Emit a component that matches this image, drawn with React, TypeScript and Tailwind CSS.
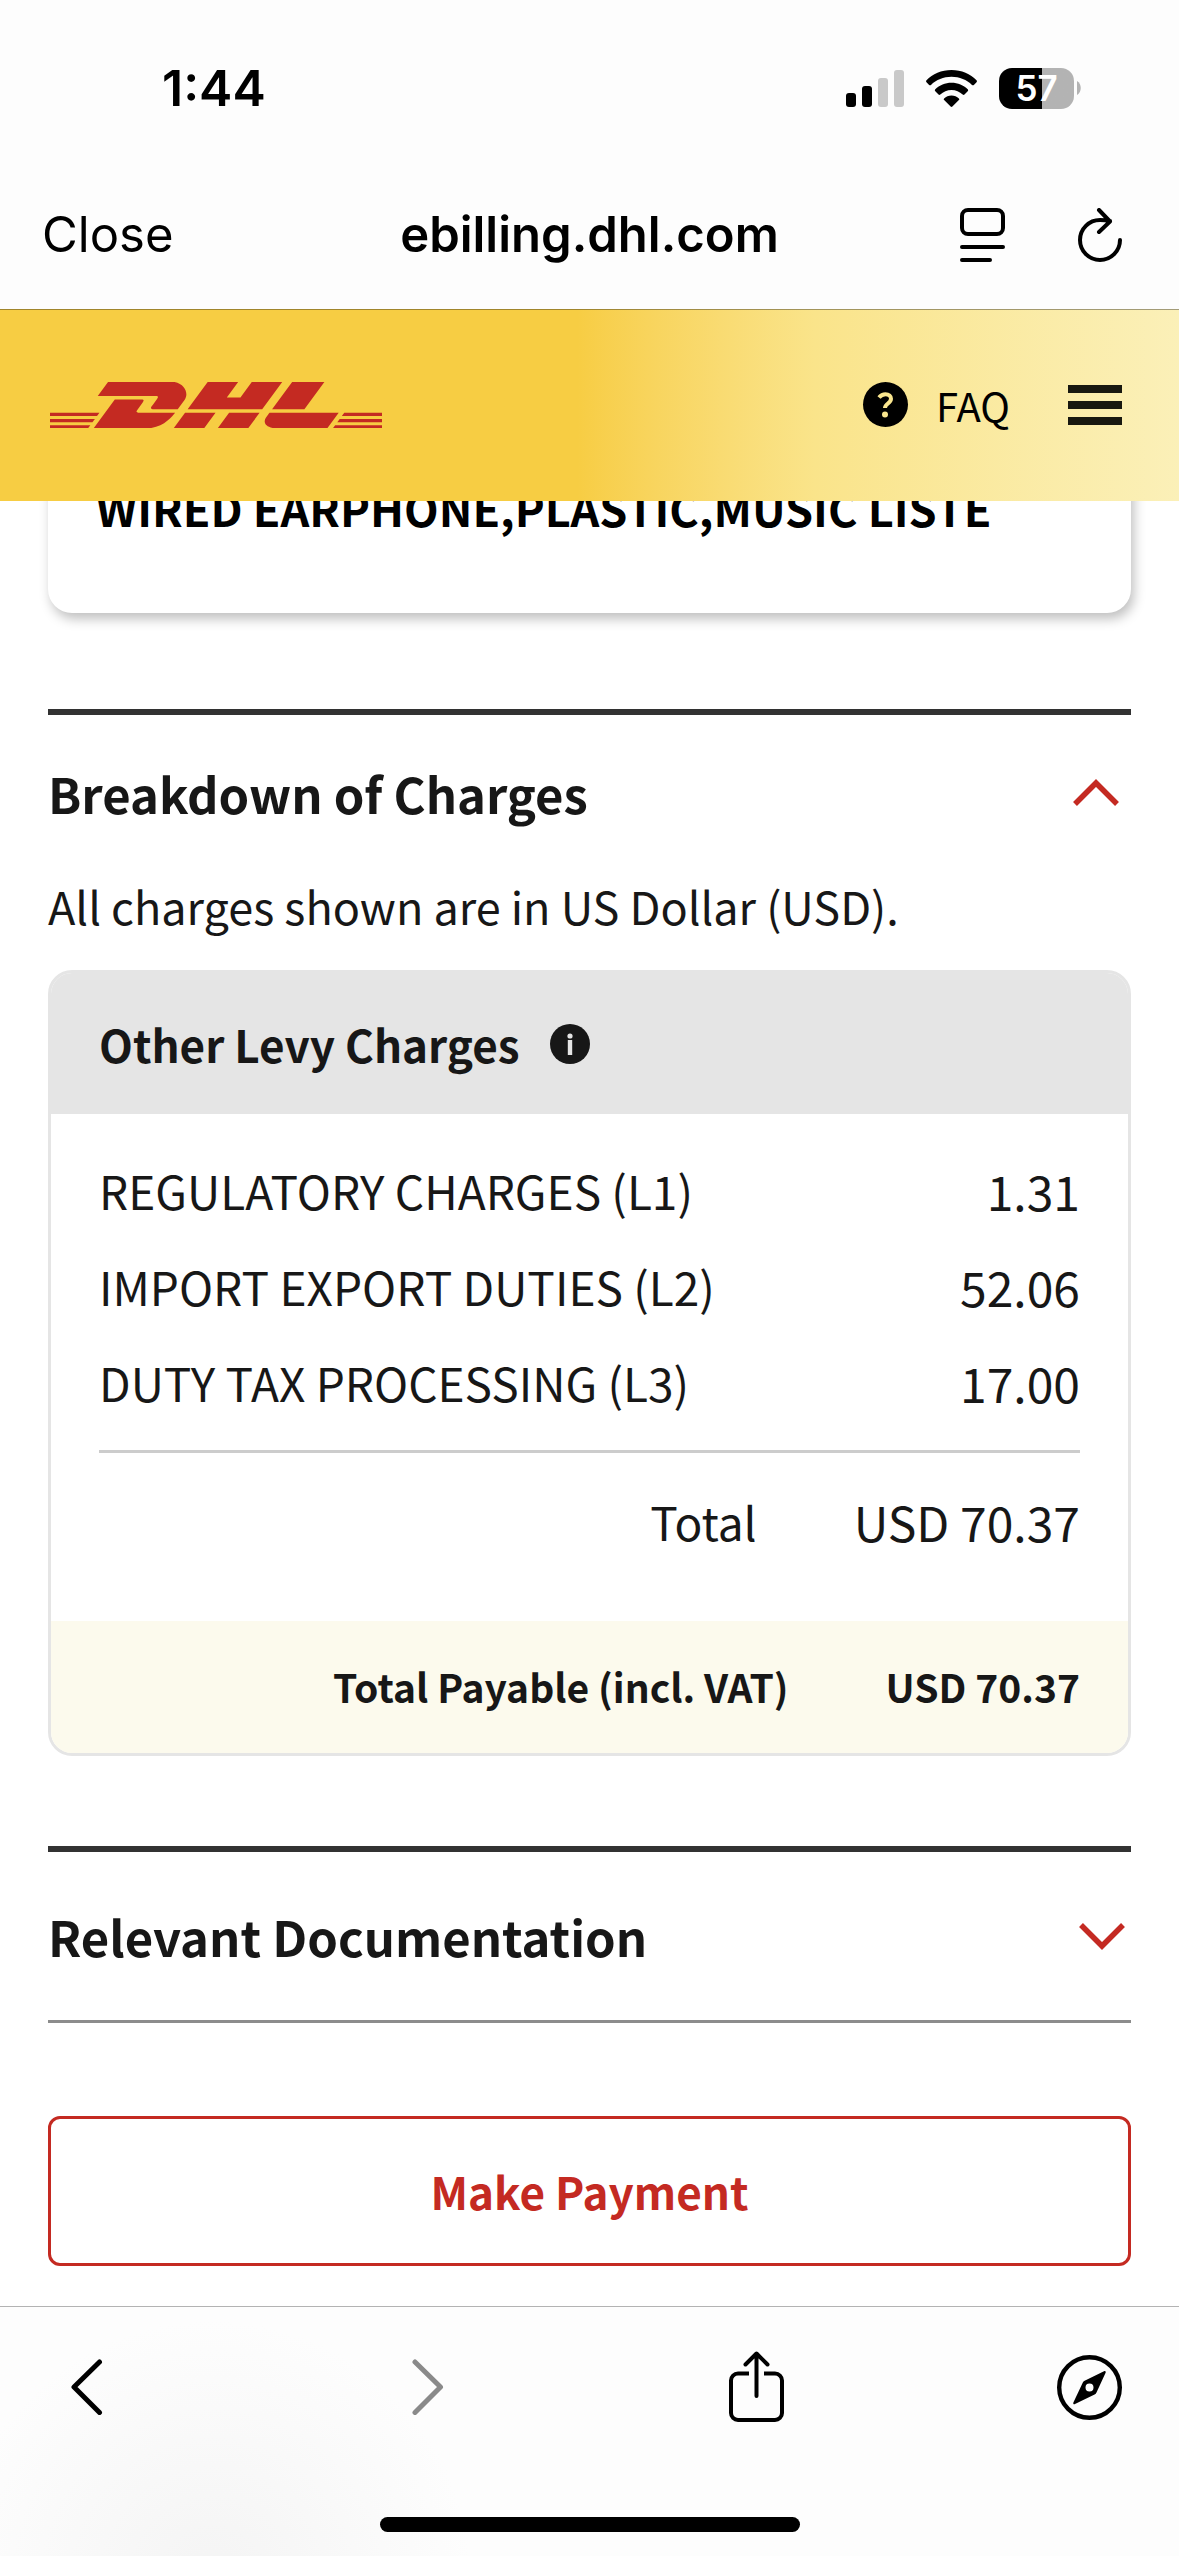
import React, { useState } from "react";
import { SiDhl } from "react-icons/si";

const charges = [
  { label: "REGULATORY CHARGES (L1)", amount: "1.31" },
  { label: "IMPORT EXPORT DUTIES (L2)", amount: "52.06" },
  { label: "DUTY TAX PROCESSING (L3)", amount: "17.00" },
];

const StatusBar = () => (
  <div className="flex h-[176px] items-center justify-between pr-[98px] pl-[162px]">
    <span className="text-[50px] leading-[64px] font-semibold">1:44</span>
    <div className="flex items-center">
      <svg className="mr-[22px] h-[38px] w-[58px]" viewBox="0 0 58 38">
        <rect x="0" y="24" width="10" height="14" rx="3" />
        <rect x="16" y="17" width="10" height="21" rx="3" />
        <rect x="32" y="9" width="10" height="29" rx="3" fill="#c9c9c9" />
        <rect x="48" y="1" width="10" height="37" rx="3" fill="#c9c9c9" />
      </svg>
      <svg className="mr-[22px] h-[38px] w-[51px]" viewBox="0 0 51 38">
        <path d="M25.500 1C35.500 1 44.500 5 50.500 11.200c.6.700.6 1.400 0 2l-2.600 2.700c-.6.600-1.300.6-1.900 0C40.700 10.800 33.500 7.800 25.500 7.800S10.300 10.800 5 15.900c-.6.600-1.300.6-1.900 0L.5 13.200c-.6-.6-.6-1.300 0-2C6.500 5 15.500 1 25.500 1z" />
        <path d="M25.500 13.800c6.400 0 12 2.500 16.200 6.500.6.600.6 1.300 0 1.900l-3.200 3.300c-.6.600-1.200.6-1.800.1-3-2.900-6.900-4.600-11.200-4.600s-8.200 1.700-11.200 4.600c-.6.500-1.200.5-1.800-.1l-3.200-3.300c-.6-.6-.6-1.300 0-1.900 4.200-4 9.800-6.500 16.200-6.500z" />
        <path d="M25.500 26.500c2.900 0 5.400 1.100 7.400 2.900.5.500.5 1.100 0 1.700l-6.500 6.400c-.6.600-1.200.6-1.800 0l-6.500-6.400c-.5-.6-.5-1.200 0-1.700 2-1.800 4.500-2.900 7.400-2.900z" />
      </svg>
      <div className="flex h-[41px] w-[75px] items-center justify-center rounded-[13px] bg-linear-to-r from-black from-57% to-[#b3b3b3] to-57%">
        <span className="text-[35px] leading-[41px] font-semibold text-white">57</span>
      </div>
      <svg className="ml-[3px] h-[14px] w-[4px]" viewBox="0 0 4 14">
        <path d="M0 0c5 3 5 11 0 14z" fill="#b3b3b3" />
      </svg>
    </div>
  </div>
);

const BrowserBar = () => (
  <div className="grid h-[133px] grid-cols-[1fr_auto_1fr] items-center px-[42px] pb-[15px]">
    <button className="justify-self-start text-[49px] leading-[64px]">Close</button>
    <span className="text-[49px] leading-[64px] font-semibold">ebilling.dhl.com</span>
    <div className="flex gap-[73px] justify-self-end pr-[15px]">
      <button aria-label="Reader">
        <svg
          className="h-[54px] w-[45px]"
          viewBox="0 0 45 54"
          fill="none"
          stroke="black"
          strokeWidth="4"
          strokeLinecap="round"
        >
          <rect x="2" y="2" width="41" height="24" rx="6" />
          <path d="M2 39h41M2 52h28" />
        </svg>
      </button>
      <button aria-label="Reload">
        <svg
          className="h-[54px] w-[44px]"
          viewBox="0 0 44 54"
          fill="none"
          stroke="black"
          strokeWidth="4"
          strokeLinecap="round"
          strokeLinejoin="round"
        >
          <path d="M42 32A20 20 0 1 1 22 12q5 0 10 1M21 2l11 11.500L21 24" />
        </svg>
      </button>
    </div>
  </div>
);

const SiteHeader = () => (
  <header className="flex h-[192px] items-center justify-between border-t border-black/35 bg-linear-to-r from-[#f7cd43] from-49% via-[#fae48a] via-69% to-[#fbf0b8] pr-[57px] pb-[2px] pl-[50px] font-['Noto_Sans_CJK_JP',sans-serif]">
    <a href="#home" aria-label="DHL">
      <SiDhl viewBox="0 10.340 24 3.320" className="h-[46px] w-[332px] text-[#c42a22]" />
    </a>
    <div className="flex items-center">
      <a href="#faq" className="flex items-center gap-[28px]">
        <span className="flex size-[45px] items-center justify-center rounded-full bg-black">
          <svg className="h-[26px] w-[17px]" viewBox="0 0 17 26" fill="none">
            <path
              d="M2 5.500C4 3 6 2.200 8.500 2.200c3.400 0 5.500 1.800 5.500 4.600 0 4.600-6 4.800-6 9.200"
              stroke="#fae68f"
              strokeWidth="4"
            />
            <circle cx="8" cy="22.500" r="3" fill="#fae68f" />
          </svg>
        </span>
        <span className="text-[40px] leading-[48px]">FAQ</span>
      </a>
      <button aria-label="Menu" className="ml-[58px] flex flex-col gap-[8px]">
        <span className="h-[8px] w-[54px] bg-[#181810]" />
        <span className="h-[8px] w-[54px] bg-[#181810]" />
        <span className="h-[8px] w-[54px] bg-[#181810]" />
      </button>
    </div>
  </header>
);

const Chevron = ({ open }: { open: boolean }) => (
  <svg
    className="h-[28px] w-[46px]"
    viewBox="0 0 46 28"
    fill="none"
    stroke="#c42a22"
    strokeWidth="5.5"
  >
    <path d={open ? "M2 25L23 4l21 21" : "M2 3l21 21L44 3"} />
  </svg>
);

const ChargesTable = () => (
  <div className="mt-[32px] overflow-hidden rounded-[24px] border-3 border-[#e5e5e5]">
    <div className="flex items-center gap-[30px] bg-[#e5e5e5] px-[48px] pt-[39px] pb-[38px]">
      <h3 className="text-[44px] leading-[64px] font-bold">Other Levy Charges</h3>
      <button aria-label="More information">
        <svg className="size-[40px]" viewBox="0 0 40 40">
          <circle cx="20" cy="20" r="20" fill="#171717" />
          <circle cx="20" cy="12" r="2.600" fill="#e5e5e5" />
          <rect x="17.800" y="16" width="4.400" height="15" fill="#e5e5e5" />
        </svg>
      </button>
    </div>
    <div className="px-[48px] pt-[28px] pb-[52px]">
      <table className="w-full text-[46px] leading-[96px]">
        <tbody>
          {charges.map((item) => (
            <tr key={item.label}>
              <th scope="row" className="text-left font-normal">
                {item.label}
              </th>
              <td className="text-right text-[48px] leading-[96px]">{item.amount}</td>
            </tr>
          ))}
        </tbody>
        <tfoot>
          <tr>
            <td colSpan={2} className="h-[43px]">
              <div className="h-[3px] bg-[#cccccc]" />
            </td>
          </tr>
          <tr>
            <th scope="row" className="w-full pr-[97px] text-right font-normal">
              Total
            </th>
            <td className="text-right text-[48px] leading-[96px] whitespace-nowrap">USD 70.37</td>
          </tr>
        </tfoot>
      </table>
    </div>
    <dl className="flex justify-end gap-[97px] bg-[#fcfaed] px-[48px] pt-[33px] pb-[35px] text-[39px] leading-[64px] font-bold">
      <dt>Total Payable (incl. VAT)</dt>
      <dd>USD 70.37</dd>
    </dl>
  </div>
);

const BottomBar = () => (
  <nav className="border-t border-[#b3b3b3] bg-[radial-gradient(circle_at_18%_110%,#f4f4f4,#fdfdfd_260px)] pt-[44px] pb-[24px]">
    <div className="flex h-[72px] items-center justify-between px-[57px]">
      <button aria-label="Back">
        <svg className="h-[56px] w-[65px]" viewBox="0 0 65 56" fill="none" stroke="black" strokeWidth="5" strokeLinecap="round" strokeLinejoin="round">
          <path d="M42.500 3L17 28l25.500 25.500" />
        </svg>
      </button>
      <button aria-label="Forward">
        <svg className="h-[56px] w-[65px]" viewBox="0 0 65 56" fill="none" stroke="#8a8a8a" strokeWidth="5" strokeLinecap="round" strokeLinejoin="round">
          <path d="M25 3l25.500 25L25 53.500" />
        </svg>
      </button>
      <button aria-label="Share">
        <svg className="h-[72px] w-[65px]" viewBox="0 0 65 72" fill="none" stroke="black" strokeWidth="4" strokeLinecap="round" strokeLinejoin="round">
          <path d="M32.500 45V3M21.500 13.500L32.500 2.500l11 11" />
          <path d="M25 22.500H14a7 7 0 0 0-7 7V62a7 7 0 0 0 7 7h37a7 7 0 0 0 7-7V29.500a7 7 0 0 0-7-7H40" strokeLinecap="butt" />
        </svg>
      </button>
      <button aria-label="Open in Safari">
        <svg className="size-[65px]" viewBox="0 0 65 65">
          <circle cx="32.500" cy="32.500" r="30.300" fill="none" stroke="black" strokeWidth="4.400" />
          <path
            fillRule="evenodd"
            d="M47 16.200c1.200-.6 2.200.4 1.600 1.600L39.500 37.500c-.4.900-1 1.500-1.900 1.900L18 49c-1.200.6-2.200-.4-1.600-1.600l9.300-19.700c.4-.9 1-1.500 1.900-1.900zM32.500 28.500a4 4 0 1 0 0 8 4 4 0 0 0 0-8z"
          />
        </svg>
      </button>
    </div>
    <div className="mx-auto mt-[94px] h-[15px] w-[420px] rounded-full bg-black" />
  </nav>
);

const App = () => {
  const [chargesOpen, setChargesOpen] = useState(true);
  const [docsOpen, setDocsOpen] = useState(false);
  return (
    <div className="flex min-h-screen flex-col bg-white font-['Inter',sans-serif] text-black">
      <div className="bg-[#fdfdfd]">
        <StatusBar />
        <BrowserBar />
      </div>
      <SiteHeader />
      <main className="flex-1 overflow-hidden px-[48px] pb-[40px] font-['Noto_Sans_CJK_JP',sans-serif] text-[#171717]">
        {/* scrolled partly under the site header */}
        <div className="-mt-[74px] rounded-[24px] bg-white px-[48px] pt-[49px] pb-[73px] shadow-[3px_6px_12px_rgba(0,0,0,0.25)]">
          <p className="text-[45px] leading-[64px] font-bold text-black">
            WIRED EARPHONE,PLASTIC,MUSIC LISTE
          </p>
        </div>
        <section className="mt-[96px] border-t-6 border-[#323232] pt-[46px]">
          <h2 className="text-[49px] leading-[64px] font-bold">
            <button
              aria-expanded={chargesOpen}
              onClick={() => setChargesOpen(!chargesOpen)}
              className="flex w-full items-center justify-between pr-[12px] text-left"
            >
              Breakdown of Charges
              <Chevron open={chargesOpen} />
            </button>
          </h2>
          {chargesOpen && (
            <>
              <p className="mt-[49px] text-[45px] leading-[64px]">
                All charges shown are in US Dollar (USD).
              </p>
              <ChargesTable />
            </>
          )}
        </section>
        <section className="mt-[90px] border-t-6 border-b-3 border-t-[#323232] border-b-[#8c8c8c] py-[52px]">
          <h2 className="text-[49px] leading-[64px] font-bold">
            <button
              aria-expanded={docsOpen}
              onClick={() => setDocsOpen(!docsOpen)}
              className="flex w-full items-center justify-between pr-[6px] text-left"
            >
              Relevant Documentation
              <Chevron open={docsOpen} />
            </button>
          </h2>
        </section>
        <button className="mt-[93px] h-[150px] w-full rounded-[12px] border-3 border-[#c42a22] text-[44px] leading-[64px] font-bold text-[#c42a22]">
          Make Payment
        </button>
      </main>
      <BottomBar />
    </div>
  );
};

export default App;
